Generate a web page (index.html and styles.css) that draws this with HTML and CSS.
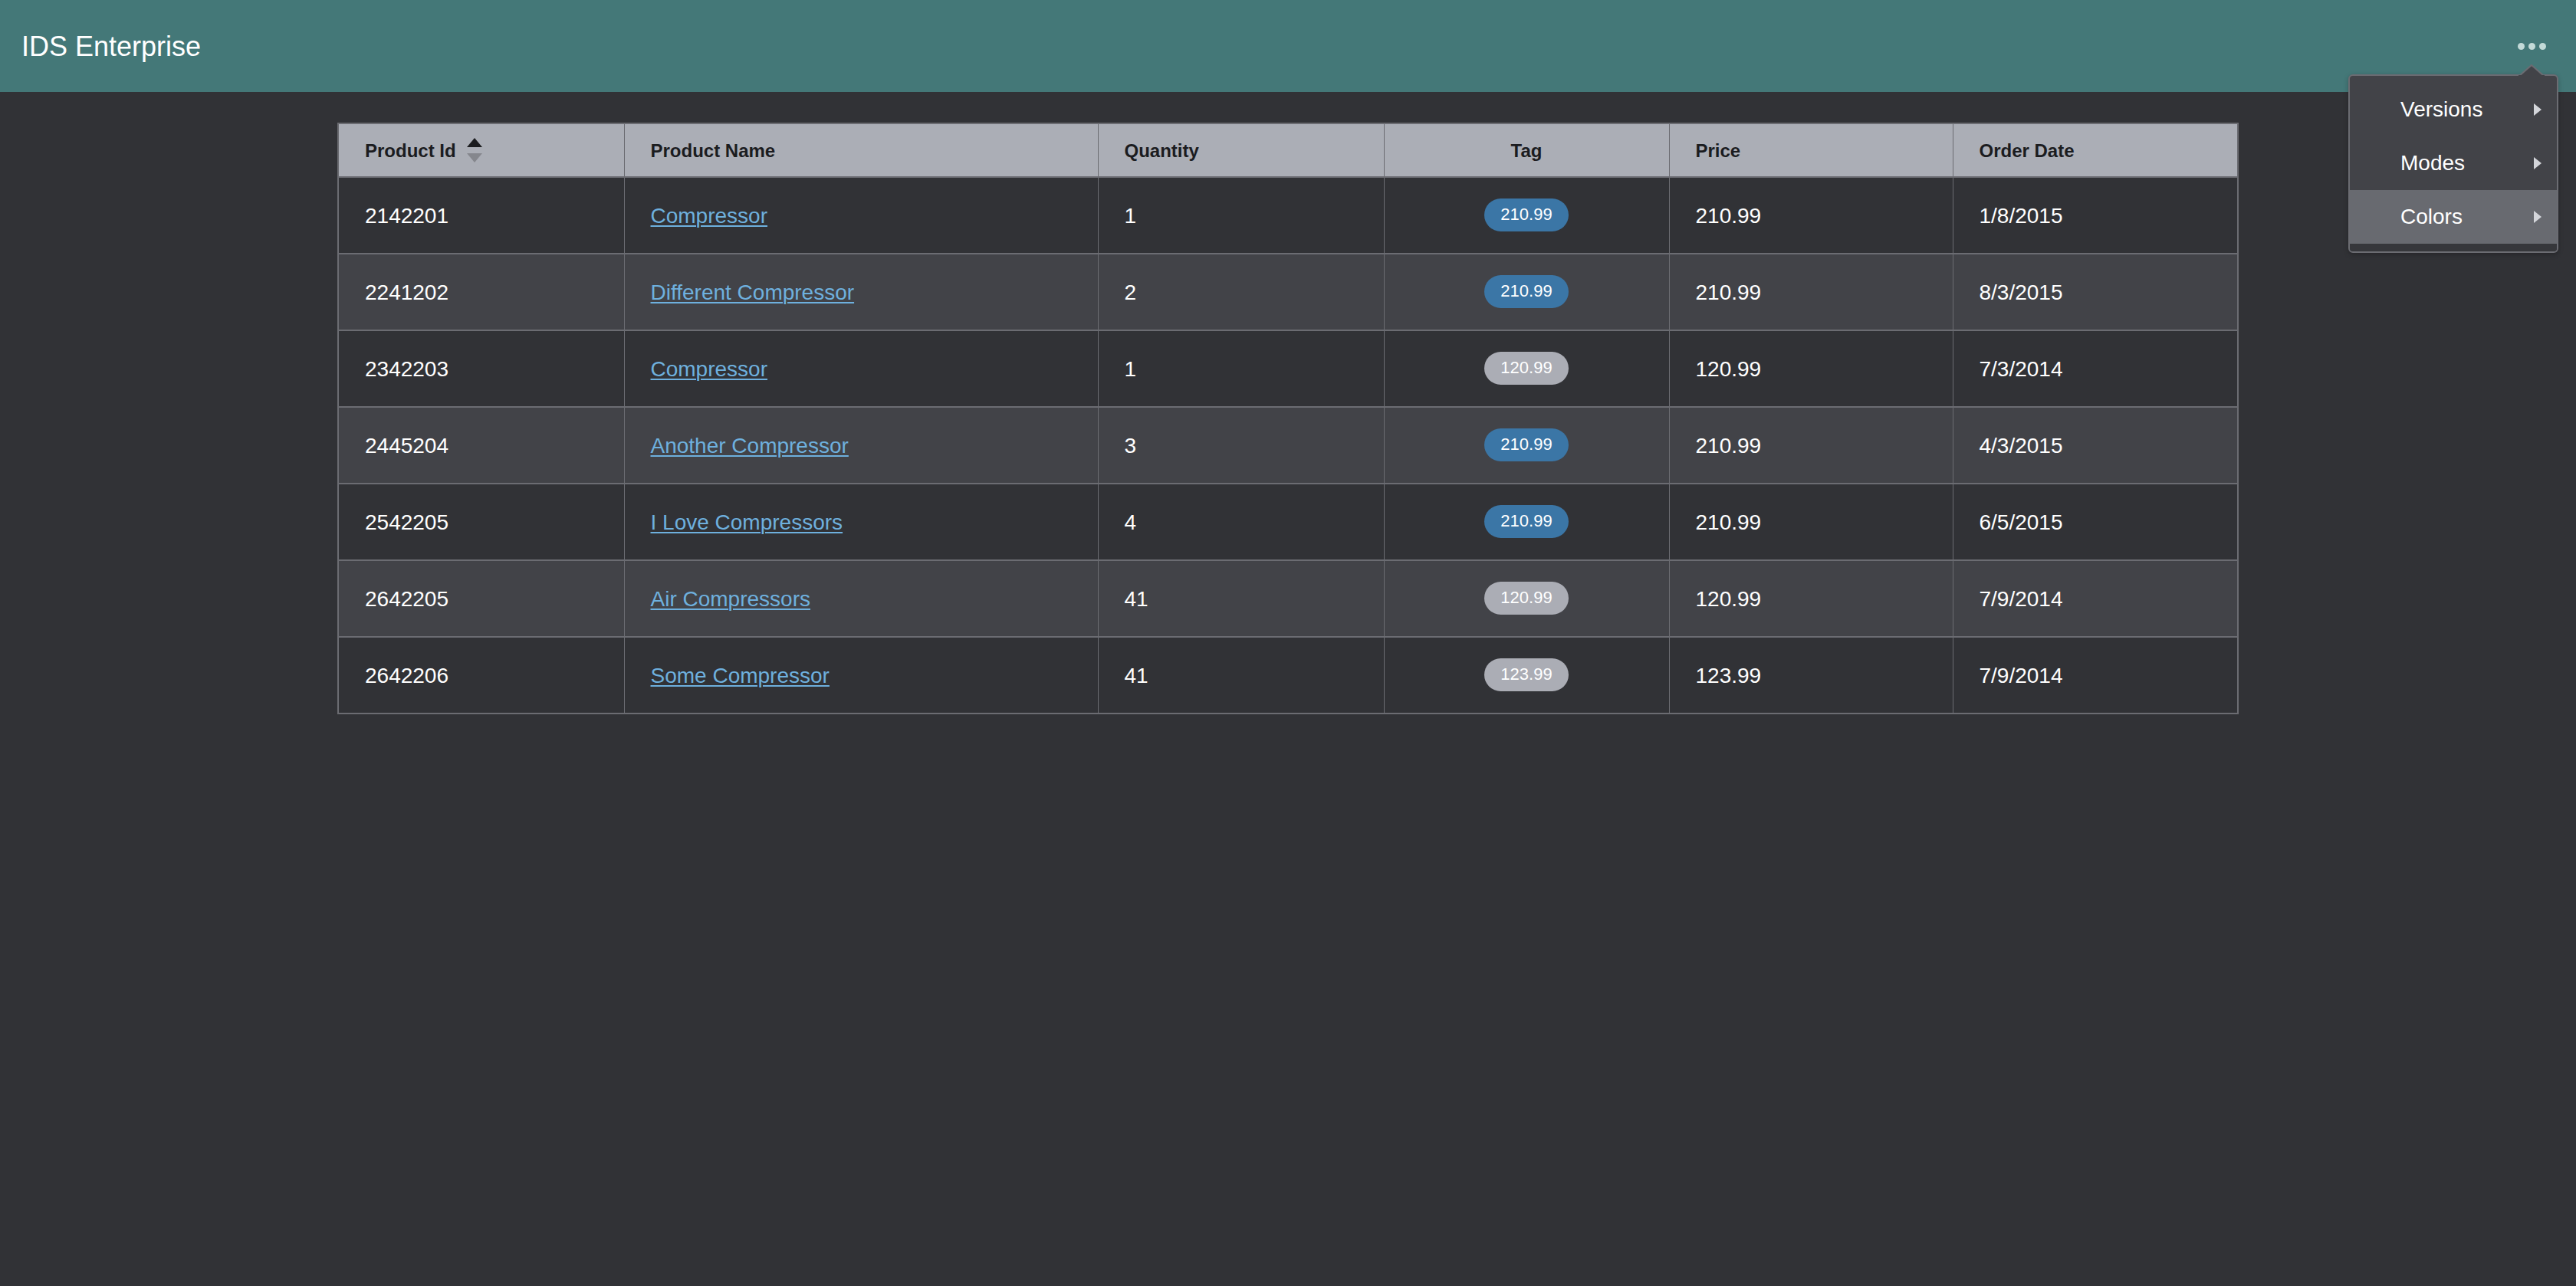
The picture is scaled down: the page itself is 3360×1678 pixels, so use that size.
FILE: index.html
```html
<!DOCTYPE html>
<html lang="en">
<head>
<meta charset="utf-8">
<title>IDS Enterprise</title>
<link rel="stylesheet" href="styles.css">
</head>
<body>
<header class="app-header">
  <h1 class="app-title">IDS Enterprise</h1>
  <button class="more-btn" aria-label="More">
    <span class="dot"></span><span class="dot"></span><span class="dot"></span>
  </button>
  <div class="popup-menu">
    <svg class="popup-arrow" width="34" height="16" viewBox="0 0 34 16"><polygon points="1,15 17,1 33,15" fill="#424348" stroke="#6b6c72" stroke-width="2"/><rect x="0" y="14" width="34" height="3" fill="#424348"/></svg>
    <ul class="menu-list">
      <li class="menu-item"><span>Versions</span><svg class="caret" width="10" height="16" viewBox="0 0 10 16"><polygon points="0,0 10,8 0,16" fill="#d3d5da"/></svg></li>
      <li class="menu-item"><span>Modes</span><svg class="caret" width="10" height="16" viewBox="0 0 10 16"><polygon points="0,0 10,8 0,16" fill="#d3d5da"/></svg></li>
      <li class="menu-item is-active"><span>Colors</span><svg class="caret" width="10" height="16" viewBox="0 0 10 16"><polygon points="0,0 10,8 0,16" fill="#d3d5da"/></svg></li>
    </ul>
    <div class="menu-foot"></div>
  </div>
</header>

<main class="page">
  <table class="grid">
    <colgroup>
      <col class="c-id"><col class="c-name"><col class="c-qty"><col class="c-tag"><col class="c-price"><col class="c-date">
    </colgroup>
    <thead>
      <tr>
        <th><span class="th-inner">Product Id
          <span class="sort">
            <svg width="20" height="12" viewBox="0 0 20 12"><polygon points="10,0 20,12 0,12" fill="#1b1c1f"/></svg>
            <svg width="20" height="12" viewBox="0 0 20 12"><polygon points="0,0 20,0 10,12" fill="#85878d"/></svg>
          </span></span></th>
        <th>Product Name</th>
        <th>Quantity</th>
        <th class="center">Tag</th>
        <th>Price</th>
        <th>Order Date</th>
      </tr>
    </thead>
    <tbody>
      <tr><td>2142201</td><td><a href="#">Compressor</a></td><td>1</td><td class="center"><span class="pill blue">210.99</span></td><td>210.99</td><td>1/8/2015</td></tr>
      <tr><td>2241202</td><td><a href="#">Different Compressor</a></td><td>2</td><td class="center"><span class="pill blue">210.99</span></td><td>210.99</td><td>8/3/2015</td></tr>
      <tr><td>2342203</td><td><a href="#">Compressor</a></td><td>1</td><td class="center"><span class="pill gray">120.99</span></td><td>120.99</td><td>7/3/2014</td></tr>
      <tr><td>2445204</td><td><a href="#">Another Compressor</a></td><td>3</td><td class="center"><span class="pill blue">210.99</span></td><td>210.99</td><td>4/3/2015</td></tr>
      <tr><td>2542205</td><td><a href="#">I Love Compressors</a></td><td>4</td><td class="center"><span class="pill blue">210.99</span></td><td>210.99</td><td>6/5/2015</td></tr>
      <tr><td>2642205</td><td><a href="#">Air Compressors</a></td><td>41</td><td class="center"><span class="pill gray">120.99</span></td><td>120.99</td><td>7/9/2014</td></tr>
      <tr><td>2642206</td><td><a href="#">Some Compressor</a></td><td>41</td><td class="center"><span class="pill gray">123.99</span></td><td>123.99</td><td>7/9/2014</td></tr>
    </tbody>
  </table>
</main>
</body>
</html>
```

FILE: styles.css
```css
* { box-sizing: border-box; }

html, body {
  margin: 0;
  padding: 0;
  background: #313236;
  font-family: "Liberation Sans", Arial, Helvetica, sans-serif;
  color: #ffffff;
  min-height: 100vh;
}

.app-header {
  position: relative;
  height: 120px;
  background: #447878;
  display: flex;
  align-items: center;
  padding: 0 39px 0 28px;
}

.app-title {
  margin: 2px 0 0;
  font-weight: 400;
  font-size: 36px;
  color: #ffffff;
  letter-spacing: 0;
}

.more-btn {
  margin-left: auto;
  margin-top: 1px;
  background: transparent;
  border: 0;
  padding: 0;
  display: flex;
  gap: 5px;
  align-items: center;
  cursor: pointer;
}

.dot {
  width: 9px;
  height: 9px;
  border-radius: 50%;
  background: #c3dad8;
  display: block;
}

.popup-menu {
  position: absolute;
  top: 97px;
  right: 23px;
  width: 274px;
  background: #424348;
  border: 2px solid #6b6c72;
  border-radius: 6px;
  z-index: 10;
  box-shadow: 0 2px 6px rgba(0,0,0,0.25);
}

.popup-arrow {
  position: absolute;
  top: -15px;
  right: 16px;
  display: block;
}

.menu-list {
  list-style: none;
  margin: 0;
  padding: 9px 0 0;
}

.menu-item {
  height: 70px;
  display: flex;
  align-items: center;
  justify-content: space-between;
  padding: 0 20px 0 66px;
  font-size: 28px;
  color: #ffffff;
}

.menu-item.is-active {
  background: #686a70;
}

.caret { display: block; }

.menu-foot {
  height: 10px;
  background: #36373b;
  border-radius: 0 0 4px 4px;
}

.page {
  padding-top: 40px;
}

.grid {
  width: 2478px;
  margin: 0 auto;
  border-collapse: collapse;
  table-layout: fixed;
  border: 2px solid #6b6c72;
}

.c-id { width: 373px; }
.c-name { width: 618px; }
.c-qty { width: 373px; }
.c-tag { width: 372px; }
.c-price { width: 370px; }
.c-date { width: 372px; }

.grid th {
  height: 70px;
  background: #abaeb6;
  color: #1b1c1f;
  font-size: 24px;
  font-weight: 700;
  text-align: left;
  padding: 2px 32px 0 34px;
  border-left: 1px solid #6b6c72;
  border-bottom: 1px solid #6b6c72;
  vertical-align: middle;
}

.th-inner {
  display: inline-flex;
  align-items: center;
}

.sort {
  display: inline-flex;
  flex-direction: column;
  gap: 8px;
  margin-left: 14px;
  margin-top: -2px;
}

.sort svg { display: block; }

.grid td {
  height: 100px;
  font-size: 28px;
  color: #ffffff;
  padding: 2px 32px 0 34px;
  border-left: 1px solid #6b6c72;
  border-top: 2px solid #6b6c72;
  vertical-align: middle;
}

.grid tbody tr:nth-child(odd) td { background: #313236; }
.grid tbody tr:nth-child(even) td { background: #424348; }

.grid th.center, .grid td.center {
  text-align: center;
  padding-left: 0;
  padding-right: 0;
}

.grid a {
  color: #6eb0de;
  text-decoration: underline;
  text-underline-offset: 3px;
  text-decoration-thickness: 2px;
}

.pill {
  display: inline-flex;
  align-items: center;
  justify-content: center;
  height: 43px;
  padding: 0 21px;
  border-radius: 22px;
  font-size: 22px;
  color: #ffffff;
  margin-top: -4px;
}

.pill.blue { background: #3b76a6; }
.pill.gray { background: #abadb5; }
```
